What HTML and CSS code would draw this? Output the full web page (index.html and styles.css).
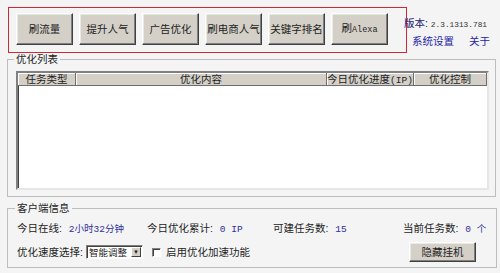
FILE: index.html
```html
<!DOCTYPE html>
<html lang="zh-CN">
<head>
  <meta charset="UTF-8" />
  <title>刷流量工具</title>
  <link rel="stylesheet" href="styles.css">
</head>
<body>

  <!-- 顶部工具栏 -->
  <div class="top">
    <div class="toolbar">
      <button class="btn big">刷流量</button>
      <button class="btn big">提升人气</button>
      <button class="btn big">广告优化</button>
      <button class="btn big">刷电商人气</button>
      <button class="btn big">关键字排名</button>
      <button class="btn big">刷<span class="mono small-mono">Alexa</span></button>
    </div>
    <div class="about">
      <div class="ver"><span class="ver-label">版本:</span> <span class="mono">2.3.1313.781</span></div>
      <div class="links"><a href="#">系统设置</a><a href="#">关于</a></div>
    </div>
  </div>

  <!-- 优化列表 -->
  <fieldset class="group list-group">
    <legend>优化列表</legend>
    <div class="listview">
      <div class="lv-head">
        <div class="col c1">任务类型</div>
        <div class="col c2">优化内容</div>
        <div class="col c3">今日优化进度<span class="mono">(IP)</span></div>
        <div class="col c4">优化控制</div>
      </div>
    </div>
  </fieldset>

  <!-- 客户端信息 -->
  <fieldset class="group info-group">
    <legend>客户端信息</legend>
    <div class="row row1">
      <div class="item w1">今日在线: <span class="val">2小时32分钟</span></div>
      <div class="item w2">今日优化累计: <span class="val">0 IP</span></div>
      <div class="item w3">可建任务数: <span class="val">15</span></div>
      <div class="item">当前任务数: <span class="val">0 个</span></div>
    </div>
    <div class="row row2">
      <span>优化速度选择:</span>
      <div class="select">
        <span class="select-text">智能调整</span>
        <span class="select-arrow">▼</span>
      </div>
      <span class="check"></span>
      <span>启用优化加速功能</span>
      <button class="btn small">隐藏挂机</button>
    </div>
  </fieldset>

</body>
</html>
```

FILE: styles.css
```css
body {
  font-family: "Liberation Sans", "Noto Sans CJK SC", sans-serif;
  font-size: 10.5px;
  line-height: 14px;
  color: #1e1e1e;
  background-color: #f4f4f4;
  margin: 0;
  width: 500px;
  height: 273px;
  overflow: hidden;
  white-space: nowrap;
}

.mono {
  font-family: "Liberation Mono", "Noto Sans CJK SC", monospace;
  font-size: 9.5px;
}

.small-mono {
  font-size: 8.5px;
}

/* 顶部 */
.top {
  display: flex;
  align-items: flex-start;
}

.toolbar {
  display: flex;
  flex-shrink: 0;
  gap: 6px;
  box-sizing: border-box;
  width: 399px;
  height: 46px;
  margin: 7px 0 0 8px;
  padding: 5px 0 0 7px;
  border: 1px solid #cc2b36;
}

.btn {
  font-family: inherit;
  font-size: 10.5px;
  line-height: 14px;
  color: #1e1e1e;
  background-color: #d4d0c8;
  border: 1px solid;
  border-color: #ffffff #404040 #404040 #ffffff;
  box-shadow: inset -1px -1px #808080, inset 1px 1px #ebe9e4;
  padding: 0;
  white-space: nowrap;
  cursor: pointer;
}

.btn.big {
  flex-shrink: 0;
  width: 57px;
  height: 32px;
}

.btn.small {
  width: 67px;
  height: 20px;
  margin-left: auto;
  flex-shrink: 0;
}

.about {
  margin: 16px 0 0 -3px;
  display: flex;
  flex-direction: column;
  gap: 2px;
}

.ver-label {
  color: #1a1a6e;
}

.ver .mono {
  font-size: 7.8px;
  color: #333;
}

.links {
  display: flex;
  gap: 15px;
  padding-left: 8px;
}

.links a {
  color: #2424a8;
  text-decoration: none;
}

/* 分组框 */
.group {
  box-sizing: border-box;
  margin: 0 0 0 7px;
  border: 1px solid #bdbdbd;
  min-inline-size: 0;
}

.group legend {
  line-height: 12px;
  padding: 0 2px;
  margin-left: -2px;
}

.list-group {
  width: 489px;
  padding: 6px 5px 6px 8px;
}

.listview {
  box-sizing: border-box;
  width: 473px;
  height: 119px;
  background-color: #ffffff;
  border: 2px solid;
  border-color: #808080 #e6e6e6 #e6e6e6 #808080;
  box-shadow: inset 1px 1px #404040;
}

.lv-head {
  display: flex;
  height: 12px;
  line-height: 12px;
  border-bottom: 1px solid #6e6e6e;
}

.col {
  box-sizing: border-box;
  background-color: #d4d0c8;
  text-align: center;
  border-right: 1px solid #6e6e6e;
  box-shadow: inset 1px 1px #ffffff;
  overflow: hidden;
}

.c1 { width: 58px; }
.c2 { width: 251px; }
.c3 { width: 87px; }
.c4 { width: 73px; }

.info-group {
  width: 490px;
  margin-top: 5px;
  padding: 7px 20px 5px 9px;
}

.row {
  display: flex;
  align-items: center;
}

.w1 { width: 130px; flex-shrink: 0; }
.w2 { width: 126px; flex-shrink: 0; }
.w3 { width: 130px; flex-shrink: 0; }

.val {
  font-family: "Liberation Mono", "Noto Sans CJK SC", monospace;
  font-size: 9.5px;
  color: #2f2f9c;
  margin-left: 4px;
}

.row2 {
  height: 20px;
  margin-top: 5px;
}

.select {
  display: flex;
  align-items: center;
  flex-shrink: 0;
  box-sizing: border-box;
  width: 57px;
  height: 14px;
  margin-left: 3px;
  background-color: #ffffff;
  border: 1px solid;
  border-color: #808080 #ffffff #ffffff #808080;
  box-shadow: inset 1px 1px #404040;
  padding: 1px 1px 1px 2px;
}

.select-text {
  flex: 1;
  font-size: 9.5px;
  line-height: 11px;
  overflow: hidden;
}

.select-arrow {
  box-sizing: border-box;
  flex-shrink: 0;
  width: 10px;
  height: 10px;
  font-size: 6px;
  line-height: 9px;
  text-align: center;
  background-color: #d4d0c8;
  border: 1px solid;
  border-color: #ffffff #404040 #404040 #ffffff;
}

.check {
  box-sizing: border-box;
  flex-shrink: 0;
  width: 9px;
  height: 9px;
  margin: 0 5px 0 9px;
  background-color: #ffffff;
  border: 1px solid;
  border-color: #808080 #ffffff #ffffff #808080;
  box-shadow: inset 1px 1px #404040;
}
```
